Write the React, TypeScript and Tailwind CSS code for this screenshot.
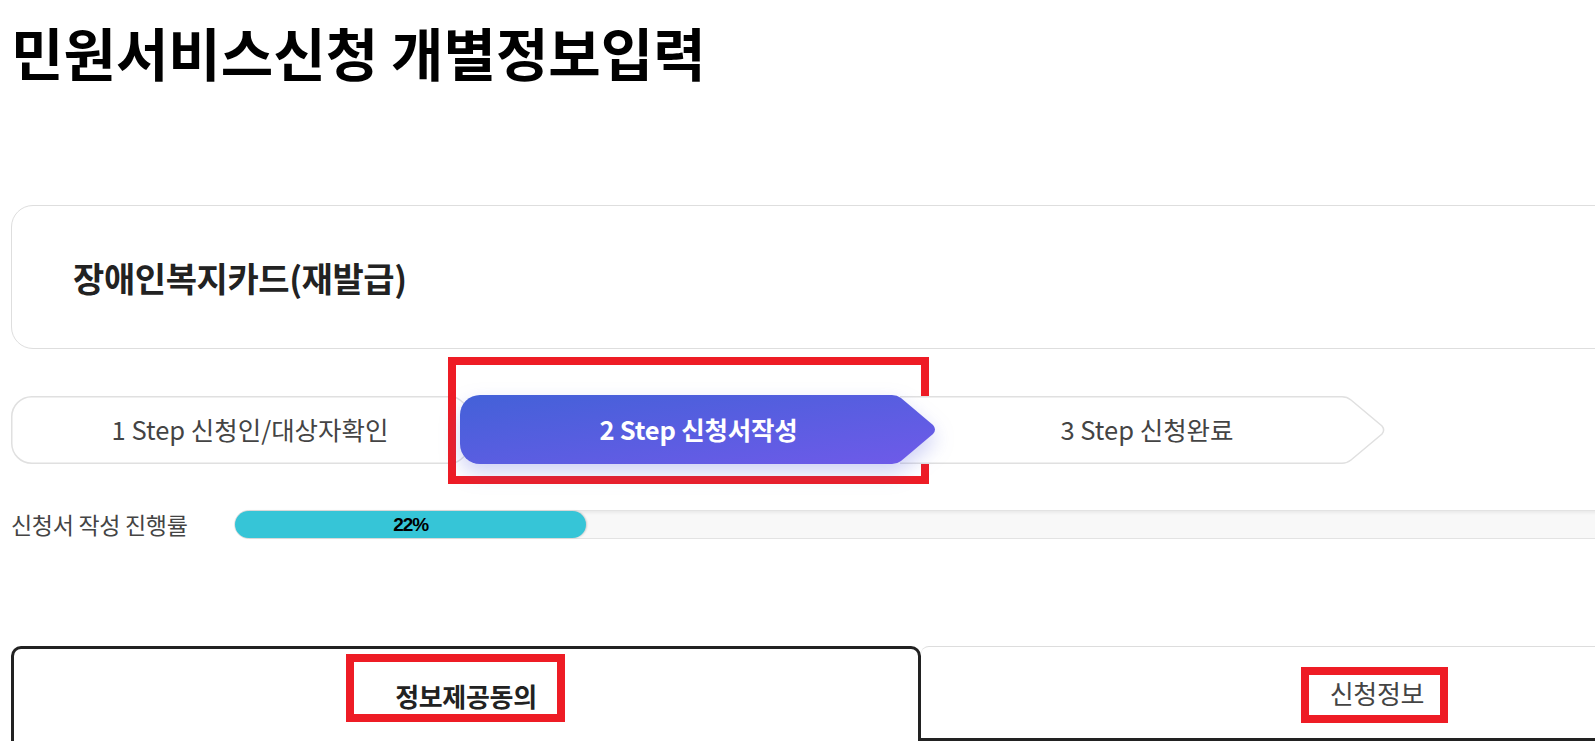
import React from "react";

const KR = { fontFamily: '"Noto Sans CJK KR", "Noto Sans", sans-serif' };

function Step1() {
  return (
    <div className="relative z-0 w-[484px] h-[68px] flex items-center justify-center pr-[6px]">
      <svg className="absolute inset-0 w-full h-full" viewBox="0 0 484 68" fill="none">
        <path
          d="M20.75 0.75 H440 Q445 0.75 449 4 L480 30 Q483.25 34 480 38 L449 64 Q445 67.25 440 67.25 H20.75 A20 20 0 0 1 0.75 47.25 V20.75 A20 20 0 0 1 20.75 0.75 Z"
          fill="#ffffff"
          stroke="#e0e0e0"
          strokeWidth="1.5"
        />
      </svg>
      <span className="relative text-[25.5px] font-normal text-[#444444]">1 Step 신청인/대상자확인</span>
    </div>
  );
}

function Step2() {
  return (
    <div className="relative z-20 ml-[-35px] w-[477px] h-[69px] flex items-center justify-center">
      <svg
        className="absolute inset-0 w-full h-full drop-shadow-[0_9px_10px_rgba(80,90,220,0.28)]"
        viewBox="0 0 477 69"
        fill="none"
      >
        <defs>
          <linearGradient id="stepgrad" x1="0" y1="0" x2="1" y2="1">
            <stop offset="0" stopColor="#4361d8" />
            <stop offset="1" stopColor="#6f5ae9" />
          </linearGradient>
        </defs>
        <path
          d="M20 0 H432 Q437 0 441 3 L473 30 Q477 34.5 473 39 L441 66 Q437 69 432 69 H20 A20 20 0 0 1 0 49 V20 A20 20 0 0 1 20 0 Z"
          fill="url(#stepgrad)"
        />
      </svg>
      <span className="relative text-[25.5px] font-bold text-white tracking-[-0.2px]">2 Step 신청서작성</span>
    </div>
  );
}

function Step3() {
  return (
    <div className="relative z-10 ml-[-37px] w-[486px] h-[68px] flex items-center justify-center pl-[8px]">
      <svg className="absolute inset-0 w-full h-full" viewBox="0 0 486 68" fill="none">
        <path
          d="M0 0.75 H442 Q447 0.75 451 4 L482 30 Q485.25 34 482 38 L451 64 Q447 67.25 442 67.25 H0 Z"
          fill="#ffffff"
        />
        <path
          d="M0 0.75 H442 Q447 0.75 451 4 L482 30 Q485.25 34 482 38 L451 64 Q447 67.25 442 67.25 H0"
          stroke="#e0e0e0"
          strokeWidth="1.5"
        />
      </svg>
      <span className="relative text-[25.5px] font-normal text-[#444444]">3 Step 신청완료</span>
    </div>
  );
}

export default function App() {
  const progress = 22;
  return (
    <div className="relative w-full min-h-[756px] overflow-hidden bg-white" style={KR}>
      <div className="ml-[11px] w-[1822px]">
        <h1 className="pt-[15px] text-[57px] leading-[72px] font-bold text-black">
          민원서비스신청 개별정보입력
        </h1>

        <div className="mt-[118px] h-[144px] border border-[#dedede] rounded-[22px] flex items-center pl-[61px]">
          <span className="text-[34px] font-bold text-[#222222] tracking-[-0.4px]">장애인복지카드(재발급)</span>
        </div>

        <div className="mt-[46px] flex items-center">
          <Step1 />
          <Step2 />
          <Step3 />
        </div>

        <div className="mt-[46px] flex items-center">
          <div className="w-[223px] text-[23px] text-[#444444] tracking-[-0.3px] leading-none">신청서 작성 진행률</div>
          <div className="flex-1 h-[29px] bg-[#f8f8f8] border border-[#e3e3e3] rounded-l-full shadow-[inset_0_2px_3px_rgba(0,0,0,0.06)]">
            <div
              className="h-full rounded-full bg-[#36c5d7] flex items-center justify-center shadow-[1px_0_2px_rgba(0,0,0,0.18)]"
              style={{ width: `${progress}%` }}
            >
              <span
                className="text-[19px] font-bold text-black tracking-[-1px] leading-none"
                style={{ fontFamily: '"Liberation Sans", Arial, sans-serif' }}
              >
                {progress}%
              </span>
            </div>
          </div>
        </div>

        <div className="mt-[107px] flex h-[95px]">
          <div className="w-[910px] border-t-[3px] border-l-[3px] border-r-[3px] border-[#222222] rounded-t-[10px] flex items-center justify-center">
            <span className="text-[26px] font-bold text-[#222222] tracking-[-0.3px]">정보제공동의</span>
          </div>
          <div className="flex-1 border-t border-t-[#dddddd] border-b-[3px] border-b-[#222222] rounded-tl-[8px] flex items-center justify-center">
            <span className="text-[26px] text-[#444444] tracking-[-0.3px]">신청정보</span>
          </div>
        </div>
      </div>

      <div className="absolute left-[448px] top-[357px] w-[481px] h-[127px] border-[8px] border-[#ee1c25] pointer-events-none" />
      <div className="absolute left-[346px] top-[654px] w-[219px] h-[68px] border-[8px] border-[#ee1c25] pointer-events-none" />
      <div className="absolute left-[1301px] top-[667px] w-[147px] h-[56px] border-[8px] border-[#ee1c25] pointer-events-none" />
    </div>
  );
}
